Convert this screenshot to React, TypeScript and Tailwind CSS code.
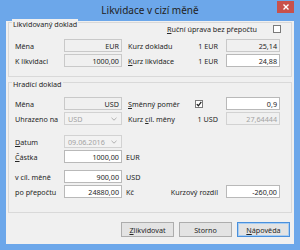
import React from "react";

const U = ({ c }: { c: string }) => <span className="underline underline-offset-[1px]">{c}</span>;

function Box({ value, kind }: { value: string; kind: "ro" | "edit" | "roGray" }) {
  if (kind === "edit")
    return (
      <div className="h-[13px] w-full border border-[#b9b9b9] bg-white flex items-center justify-end pr-[2px] text-[#1e1e1e]">
        {value}
      </div>
    );
  if (kind === "roGray")
    return (
      <div className="h-[13px] w-full border border-[#d2d2d2] bg-[#f0f0f0] flex items-center justify-end pr-[2px] text-[#a3a3a3]">
        {value}
      </div>
    );
  return (
    <div className="h-[13px] w-full border border-[#c9c9c9] bg-[#f0f0f0] flex items-center justify-end pr-[2px] text-[#1e1e1e]">
      {value}
    </div>
  );
}

function Combo({ value }: { value: string }) {
  return (
    <div className="h-[13px] w-full border border-[#d2d2d2] bg-[#f2f2f2] flex items-center justify-between pl-[3px] pr-[4px] text-[#a3a3a3]">
      <span>{value}</span>
      <svg width="6" height="4" viewBox="0 0 6 4">
        <polyline points="0.5,0.8 3,3.2 5.5,0.8" fill="none" stroke="#b0b0b0" strokeWidth="1" />
      </svg>
    </div>
  );
}

function Check({ checked }: { checked?: boolean }) {
  return (
    <div className="w-[8px] h-[8px] border border-[#7a7a7a] bg-white flex items-center justify-center shrink-0">
      {checked && (
        <svg width="6" height="6" viewBox="0 0 6 6">
          <path d="M0.8 3.1 L2.4 4.8 L5.3 0.9" fill="none" stroke="#202020" strokeWidth="1.3" />
        </svg>
      )}
    </div>
  );
}

function Row({ label, left, middle, right, className }: { label: React.ReactNode; left: React.ReactNode; middle?: React.ReactNode; right?: React.ReactNode; className?: string }) {
  return (
    <div className={"flex items-center h-[13px] " + (className ?? "")}>
      <div className="w-[49px] shrink-0 whitespace-nowrap">{label}</div>
      <div className="w-[58px] shrink-0">{left}</div>
      <div className="w-[104px] shrink-0 flex items-center whitespace-nowrap">{middle}</div>
      <div className="w-[54px] shrink-0">{right}</div>
    </div>
  );
}

export default function App() {
  return (
    <div className="w-[300px] h-[250px] bg-[#6ca7ea] flex flex-col font-['Noto_Sans',sans-serif] text-[7.2px] leading-[10px] text-[#262626] relative overflow-hidden">
      <div className="h-[21px] shrink-0 flex items-center justify-center pb-[2px] text-[10px] text-[#222]">
        Likvidace v cizí měně
      </div>
      <div className="absolute right-[6px] top-[1px] w-[17px] h-[12px] bg-[#c8514c] flex items-center justify-center">
        <svg width="6" height="6" viewBox="0 0 6 6">
          <path d="M0.5 0.5 L5.5 5.5 M5.5 0.5 L0.5 5.5" stroke="white" strokeWidth="1.4" />
        </svg>
      </div>

      <div className="mx-[6px] h-[223px] bg-[#f0f0f0] px-[2px] flex flex-col">
        {/* Group 1 */}
        <div className="relative mt-[1px] h-[55px] border border-[#d9d9d9] pl-[6px] flex flex-col">
          <span className="absolute left-[3px] top-[-4px] px-[1px] bg-[#f0f0f0]">Likvidovaný doklad</span>
          <div className="mt-[1px] h-[9px] flex items-center justify-end pr-[10px]">
            <span className="mr-[16px]"><U c="R" />uční úprava bez přepočtu</span>
            <Check />
          </div>
          <Row
            className="mt-[6px]"
            label="Měna"
            left={<Box kind="ro" value="EUR" />}
            middle={<><span className="pl-[6px] flex-1">Kurz dokladu</span><span className="pr-[8px]">1 EUR</span></>}
            right={<Box kind="ro" value="25,14" />}
          />
          <Row
            className="mt-[2px]"
            label="K likvidaci"
            left={<Box kind="ro" value="1000,00" />}
            middle={<><span className="pl-[6px] flex-1"><U c="K" />urz likvidace</span><span className="pr-[8px]">1 EUR</span></>}
            right={<Box kind="edit" value="24,88" />}
          />
        </div>

        {/* Group 2 */}
        <div className="relative mt-[5px] h-[131px] border border-[#d9d9d9] pl-[6px] flex flex-col">
          <span className="absolute left-[3px] top-[-4px] px-[1px] bg-[#f0f0f0]">Hradící doklad</span>
          <Row
            className="mt-[14px]"
            label="Měna"
            left={<Box kind="ro" value="USD" />}
            middle={<><span className="pl-[6px] w-[73px]"><U c="S" />měnný poměr</span><Check checked /></>}
            right={<Box kind="edit" value="0,9" />}
          />
          <Row
            className="mt-[2px]"
            label="Uhrazeno na"
            left={<Combo value="USD" />}
            middle={<><span className="pl-[6px] flex-1">Kurz <U c="c" />íl. měny</span><span className="pr-[8px]">1 USD</span></>}
            right={<Box kind="roGray" value="27,64444" />}
          />
          <Row
            className="mt-[10px]"
            label={<><U c="D" />atum</>}
            left={<Combo value="09.06.2016" />}
          />
          <Row
            className="mt-[2px]"
            label={<><U c="Č" />ástka</>}
            left={<Box kind="edit" value="1000,00" />}
            middle={<span className="pl-[4px]">EUR</span>}
          />
          <Row
            className="mt-[7px]"
            label="v cíl. měně"
            left={<Box kind="edit" value="900,00" />}
            middle={<span className="pl-[4px]">USD</span>}
          />
          <Row
            className="mt-[2px]"
            label="po přepočtu"
            left={<Box kind="edit" value="24880,00" />}
            middle={<><span className="pl-[4px] flex-1">Kč</span><span className="pr-[8px]">Kurzový rozdíl</span></>}
            right={<Box kind="edit" value="-260,00" />}
          />
        </div>

        {/* Buttons */}
        <div className="mt-[9px] flex justify-end gap-[5px] pr-[2px]">
          <div className="w-[53px] h-[15px] border border-[#adadad] bg-[#e3e3e3] flex items-center justify-center"><span><U c="Z" />likvidovat</span></div>
          <div className="w-[53px] h-[15px] border border-[#adadad] bg-[#e3e3e3] flex items-center justify-center">Storno</div>
          <div className="w-[53px] h-[15px] border border-[#4a90dc] shadow-[inset_0_0_0_1px_#a8cdf2] bg-[#e3e3e3] flex items-center justify-center"><span><U c="N" />ápověda</span></div>
        </div>
      </div>
    </div>
  );
}
